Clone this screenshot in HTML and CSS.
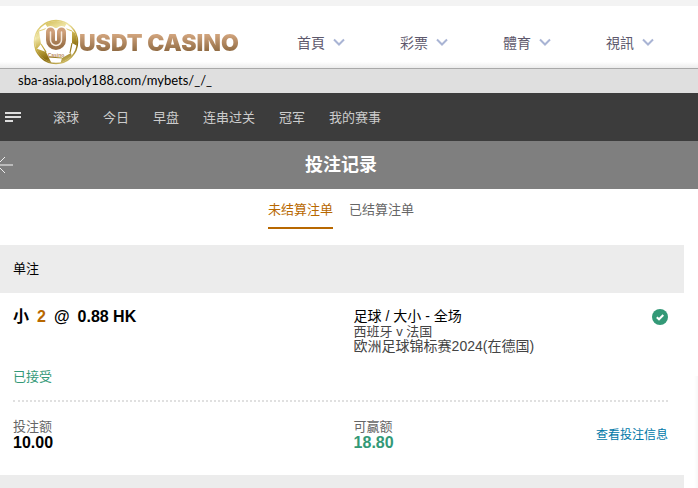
FILE: index.html
```html
<!DOCTYPE html>
<html lang="zh-CN">
<head>
<meta charset="UTF-8">
<meta name="viewport" content="width=device-width, initial-scale=1">
<title>投注记录</title>
<link rel="stylesheet" href="styles.css">
</head>
<body>

<header class="site-header">
  <a class="logo" href="#">
    <svg class="logo-ball" viewBox="0 0 46 46" width="46" height="46" aria-hidden="true">
      <defs>
        <linearGradient id="gold" gradientUnits="userSpaceOnUse" x1="10" y1="0" x2="30" y2="46">
          <stop offset="0" stop-color="#cdb545"/>
          <stop offset=".3" stop-color="#f0e6a8"/>
          <stop offset=".5" stop-color="#c9b04a"/>
          <stop offset=".75" stop-color="#8a6c10"/>
          <stop offset="1" stop-color="#d8c670"/>
        </linearGradient>
        <linearGradient id="bronze" x1="0" y1="0" x2="0" y2="1">
          <stop offset="0" stop-color="#cfa07a"/>
          <stop offset="1" stop-color="#9b7148"/>
        </linearGradient>
        <clipPath id="ball"><circle cx="23" cy="23" r="21"/></clipPath>
      </defs>
      <circle cx="23" cy="23" r="21.5" fill="#fff" stroke="url(#gold)" stroke-width="1.5"/>
      <g clip-path="url(#ball)">
        <path d="M11 3 L22 0 L34 4 L31 9 L15 9Z M0 13 L6 12 L8 25 L3 31Z M39 12 L46 17 V28 L39 24Z M2 29 L13 33 L19 45 L6 44Z M29 39 L38 34 L40 42 L27 46Z" fill="url(#gold)"/>
        <path d="M6 12 L15 9 M31 9 L39 12 M8 25 L13 33 M39 24 L37 34 M16 38 L29 39" fill="none" stroke="url(#gold)" stroke-width="1.2"/>
      </g>
      <path d="M17.500 13 V21 A5.500 5.500 0 0 0 28.500 21 V13" fill="none" stroke="#fff" stroke-width="12" stroke-linecap="round"/>
      <path d="M17.500 13 V21 A5.500 5.500 0 0 0 28.500 21 V13" fill="none" stroke="url(#bronze)" stroke-width="9" stroke-linecap="round"/>
      <path d="M17.500 13 V21 A5.500 5.500 0 0 0 28.500 21 V13" fill="none" stroke="#f7ebdf" stroke-width="1.500" stroke-linecap="round"/>
      <text class="logo-tag" x="23" y="38" text-anchor="middle">Casino</text>
    </svg>
    <span class="logo-name">USDT CASINO</span>
  </a>
  <nav class="site-nav">
    <a href="#">首頁<svg viewBox="0 0 12 8" width="12" height="8"><path d="M1 1.500 L6 6.500 L11 1.500"/></svg></a>
    <a href="#">彩票<svg viewBox="0 0 12 8" width="12" height="8"><path d="M1 1.500 L6 6.500 L11 1.500"/></svg></a>
    <a href="#">體育<svg viewBox="0 0 12 8" width="12" height="8"><path d="M1 1.500 L6 6.500 L11 1.500"/></svg></a>
    <a href="#">視訊<svg viewBox="0 0 12 8" width="12" height="8"><path d="M1 1.500 L6 6.500 L11 1.500"/></svg></a>
  </nav>
</header>

<div class="url-bar">sba-asia.poly188.com/mybets/_/_</div>

<nav class="sport-nav">
  <button type="button" class="menu-btn" aria-label="菜单">
    <svg viewBox="0 0 16 10" width="16" height="10"><path d="M0 1 H16 M0 5 H16 M0 9 H8"/></svg>
  </button>
  <a href="#">滚球</a>
  <a href="#">今日</a>
  <a href="#">早盘</a>
  <a href="#">连串过关</a>
  <a href="#">冠军</a>
  <a href="#">我的赛事</a>
</nav>

<div class="title-bar">
  <button type="button" class="back-btn" aria-label="返回">
    <svg viewBox="0 0 13 18" width="13" height="18"><path d="M-3 9 H13" stroke-width="2"/><path class="head" d="M5 1 L-3 9 L5 17"/></svg>
  </button>
  <h1>投注记录</h1>
</div>

<main class="bets">
  <div class="tabs">
    <button type="button" class="tab active">未结算注单</button>
    <button type="button" class="tab">已结算注单</button>
  </div>

  <h2 class="group-title">单注</h2>
  <article class="bet">
    <div class="bet-row bet-main">
      <div class="selection">
        <p class="odds"><span>小</span><span class="line">2</span><span>@</span><span>0.88 HK</span></p>
        <p class="status">已接受</p>
      </div>
      <div class="match">
        <p class="market">足球 / 大小 - 全场</p>
        <p class="teams">西班牙 v 法国</p>
        <p class="league">欧洲足球锦标赛2024(在德国)</p>
      </div>
      <svg class="check" viewBox="0 0 16 16" width="16" height="16" role="img" aria-label="已接受">
        <circle cx="8" cy="8" r="8" fill="#339977"/>
        <path d="M4.800 8.200 L7 10.300 L11.300 6" fill="none" stroke="#fff" stroke-width="2"/>
      </svg>
    </div>
    <div class="bet-row bet-foot">
      <div>
        <p class="label">投注额</p>
        <p class="amount">10.00</p>
      </div>
      <div>
        <p class="label">可赢额</p>
        <p class="amount win">18.80</p>
      </div>
      <a class="detail" href="#">查看投注信息</a>
    </div>
  </article>
  <div class="group-end"></div>
</main>

</body>
</html>
```
FILE: styles.css
```css
*{box-sizing:border-box;}
body{display:flex;flex-direction:column;min-height:100vh;margin:0;background:#fff linear-gradient(to left,#f7f7f7,#fff) no-repeat right bottom/4px 112px;color:#000;font-family:"Liberation Sans","Noto Sans CJK SC",sans-serif;font-size:13px;}
h1,h2,p{margin:0;}
a{color:inherit;text-decoration:none;white-space:nowrap;}
button{padding:0;border:none;background:none;color:inherit;font:inherit;cursor:pointer;}
svg{display:block;flex:none;}

/* site header */
.site-header{display:flex;align-items:center;height:68px;padding:10px 0 0 33px;border-top:6px solid #f3f3f3;background:linear-gradient(#fff 90%,#ececec);}
.logo{display:flex;align-items:center;width:264px;flex:none;}
.logo-tag{font:bold 5px "Liberation Sans",sans-serif;fill:#b98a5c;}
.logo-name{font-family:Inter,sans-serif;font-weight:900;font-size:23px;line-height:30px;padding-top:2px;background:linear-gradient(#d9ab84 20%,#8f6a42 80%);-webkit-background-clip:text;background-clip:text;color:transparent;}
.site-nav{display:flex;gap:55px;font-family:"Noto Sans CJK TC",sans-serif;font-size:14px;line-height:20px;color:#5d586c;}
.site-nav a{display:flex;align-items:center;gap:8px;}
.site-nav path{fill:none;stroke:#a9b4d4;stroke-width:2;}

.url-bar{height:25px;padding-left:18px;border-top:1px solid #a9a9a9;background:#dfdfdf;font:13px/22px Lato,sans-serif;}

/* sport menu */
.sport-nav{display:flex;align-items:center;gap:24px;height:48px;padding:0 0 2px 5px;background:#3c3c3c;color:#ccc;}
.menu-btn{margin-right:8px;padding-top:2px;}
.menu-btn path{fill:none;stroke:#ddd;stroke-width:2;}

.title-bar{display:flex;align-items:center;height:48px;padding-right:16px;background:#7f7f7f;color:#fff;}
.title-bar h1{flex:1;padding-right:13px;text-align:center;font-size:18px;line-height:24px;}
.back-btn path{fill:none;stroke:#bbb;}
.back-btn .head{stroke:#eee;}

/* bet list */
.bets{display:flex;flex:1;flex-direction:column;margin-right:14px;}
.tabs{display:flex;justify-content:center;gap:16px;height:56px;padding-right:2px;color:#666;}
.tab{height:40px;border-bottom:2px solid transparent;}
.tab.active{color:#b86800;border-color:#b86800;}
.group-title{height:48px;padding-left:13px;background:#ececec;font-size:13px;font-weight:normal;line-height:48px;}
.group-end{flex:1;background:#ececec;}
.bet{padding:16px 16px 24px 13px;}
.bet-row{display:grid;grid-template-columns:52% 1fr auto;}
.bet-main{padding-bottom:15px;border-bottom:2px dotted #e0e0e0;}
.odds{display:flex;gap:8px;margin-bottom:44px;font-size:16px;font-weight:bold;line-height:16px;}
.line{color:#b86800;}
.status{line-height:16px;color:#339977;}
.match{line-height:15px;color:#444;}
.market,.league{font-size:14px;}
.market{color:#000;}
.bet-foot{align-items:center;padding-top:17px;line-height:16px;}
.label{color:#666;}
.amount{font-size:16px;font-weight:bold;}
.win{color:#339977;}
.detail{font-size:12px;color:#0078a8;}
```
